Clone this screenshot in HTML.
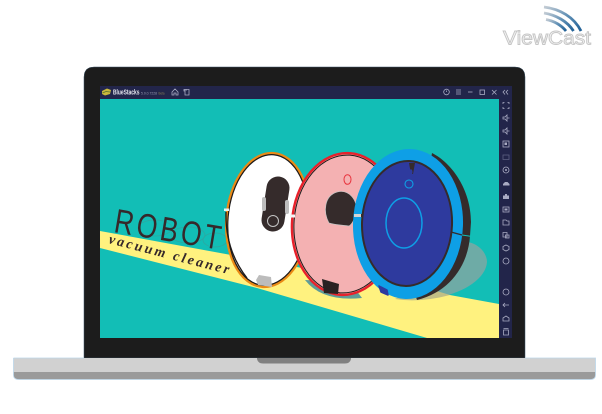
<!DOCTYPE html>
<html><head><meta charset="utf-8"><style>
html,body{margin:0;padding:0;background:#fff;width:602px;height:414px;overflow:hidden}
svg{display:block;filter:blur(.3px)}
text{font-family:"Liberation Sans",sans-serif}
</style></head><body>
<svg width="602" height="414" viewBox="0 0 602 414" xmlns="http://www.w3.org/2000/svg">
<defs>
<clipPath id="scr"><rect x="100" y="99" width="399" height="239"/></clipPath>
<linearGradient id="arc" x1="0" x2="1" y1="0" y2="1"><stop offset="0" stop-color="#c4ccd4"/><stop offset=".5" stop-color="#5f8fb5"/><stop offset="1" stop-color="#1f5f95"/></linearGradient>
</defs>

<!-- logo -->
<g fill="none" stroke="url(#arc)" stroke-width="2.800">
<path d="M544 7C560 9 574 17 581 31"/>
<path d="M544 13C556 15 567 21 573.500 31"/>
<path d="M546 19.500C554 21 561 25 566 31"/>
</g>
<text x="503" y="44.500" font-size="19" textLength="88" lengthAdjust="spacingAndGlyphs" fill="#f6f6f6" stroke="#c6c6c6" stroke-width=".9">ViewCast</text>

<!-- laptop -->
<path d="M84 358V77Q84 67 94 67H515Q525 67 525 77V358Z" fill="#1c1c1c" stroke="#3d5568" stroke-width=".5"/>
<rect x="100" y="86" width="412" height="13" fill="#22254a"/>
<rect x="499" y="86" width="13" height="252" fill="#22254a"/>
<rect x="13.500" y="358" width="582" height="14" fill="#d1d1d1"/>
<path d="M13.500 372H595.500V375Q595.500 379.500 590 379.500H19Q13.500 379.500 13.500 375Z" fill="#9a9a9a"/>
<path d="M13.500 358H84M525 358H595.500V375Q595.500 379.500 590 379.500H19Q13.500 379.500 13.500 375V358" fill="none" stroke="#bcd6ea" stroke-width=".8"/>
<path d="M257 358H351V359Q350 363.500 345 363.500H263Q258 363.500 257 359Z" fill="#808080"/>

<!-- screen -->
<g clip-path="url(#scr)">
<rect x="100" y="99" width="399" height="239" fill="#12beb6"/>
<path d="M100 231L499 304V338H427L257 288L100 248Z" fill="#fff27f"/>
<!-- shadows -->
<path d="M420 297C410 280 430 250 460 242C476 240 487 252 487 262C486 278 465 292 440 297Z" fill="#6eaba6"/>
<path d="M395 299Q420 303 450 295L420 286Z" fill="#c3bf85"/>
<path d="M305 280Q322 302 362 298L350 282Z" fill="#5f9c98"/>

<!-- ghost text -->
<g fill="none" stroke="#2ea7a1" stroke-width=".8"><ellipse cx="155" cy="228" rx="17" ry="8"/><ellipse cx="188" cy="235" rx="17" ry="8"/><ellipse cx="215" cy="240" rx="12" ry="7"/></g>

<!-- ROBOT -->
<text transform="translate(113 232) rotate(9.500) scale(.78 1)" font-size="34" letter-spacing="4.200" fill="#35282a">ROBOT</text>
<text transform="translate(108 243) rotate(14.500)" style='font-family:"Liberation Serif",serif' font-size="14" font-style="italic" font-weight="bold" textLength="124" fill="#35282a">vacuum cleaner</text>

<!-- white robot -->
<g transform="rotate(5 268 220)">
<ellipse cx="268" cy="220" rx="41.500" ry="67" fill="#fff" stroke="#ea8a16" stroke-width="2.600"/>
<ellipse cx="268" cy="220" rx="40" ry="65.500" fill="none" stroke="#1d1a1a" stroke-width="1.200"/>
</g>
<path d="M226 212Q225 250 247 278" fill="none" stroke="#1d1a1a" stroke-width="1.300"/>
<rect x="224" y="208.500" width="5" height="2.500" fill="#e8f6f4"/>
<path d="M278 188L273 220" stroke="#352b2b" stroke-width="23" stroke-linecap="round"/>
<rect x="262" y="197" width="4" height="14" rx="2" fill="#bdbdbd"/>
<rect x="285" y="200" width="4" height="14" rx="2" fill="#bdbdbd"/>
<circle cx="273" cy="221" r="5.500" fill="none" stroke="#c4c4c4" stroke-width="1"/>
<path d="M259 275L271 277L272 287L258 285L256 280Z" fill="#bcbcbc"/>

<!-- pink robot -->
<g transform="rotate(4 345 224)">
<ellipse cx="345" cy="224" rx="53" ry="71" fill="#f4b1b2" stroke="#e8212b" stroke-width="2.400"/>
<ellipse cx="345" cy="224" rx="51" ry="69" fill="none" stroke="#1d1a1a" stroke-width="1"/>
</g>
<rect x="290" y="214.500" width="5" height="3" fill="#f5f5f5"/>
<ellipse cx="347.500" cy="179.500" rx="3.500" ry="4.800" fill="none" stroke="#e8333d" stroke-width="1"/>
<path d="M329 223C323 212 324 196 337 192C349 189 358 200 356 212C355 220 351 225 349 226C342 225 335 225 329 223Z" fill="#352b2b" stroke="#c4c4c4" stroke-width=".7"/>
<path d="M322 279L339 284L338 294L324 293Z" fill="#2a2222"/>

<!-- blue robot -->
<path d="M432 153C452 163 471 190 471 222L470 236C468 265 450 292 417 300L410 280Z" fill="#352b2b"/>
<g transform="rotate(2 408 224)">
<ellipse cx="408" cy="224" rx="55" ry="75" fill="#0e9fe6"/>
<ellipse cx="407" cy="223.500" rx="45" ry="62.500" fill="#2e3a9e" stroke="#352b2b" stroke-width="2"/>
</g>
<path d="M409 163L415 163L413 174H411Z" fill="#352b2b"/>
<ellipse cx="411" cy="172" rx="1.500" ry="2.800" fill="#2e3a9e"/>
<circle cx="409" cy="184" r="4" fill="none" stroke="#0e9fe6" stroke-width="1.100"/>
<ellipse cx="404" cy="223" rx="18" ry="25" fill="none" stroke="#0e9fe6" stroke-width="1.500"/>
<rect x="354" y="214" width="7" height="3" fill="#d5d5d5"/>
<rect x="361" y="214" width="2" height="3" fill="#352b2b"/>
<path d="M451 232L462 235" stroke="#352b2b" stroke-width="1.400"/>
<path d="M462 235L472 236.500" stroke="#12beb6" stroke-width="1"/>
<path d="M379 286L387 290L388 295L381 292Z" fill="#2e3a9e" stroke="#2e3a9e" stroke-width="1.500" stroke-linejoin="round"/>
</g>

<!-- title bar -->
<path d="M102 91L107 88.500L111 90L110 94L105 95.500L102 94Z" fill="#c9b83c"/>
<path d="M102.500 93L106 91.500L110 92" stroke="#55702e" stroke-width=".7" fill="none"/>
<text x="113" y="94.500" font-size="7" font-weight="bold" textLength="26.500" lengthAdjust="spacingAndGlyphs" fill="#e6e7ef">BlueStacks</text>
<text x="141" y="94.500" font-size="4" textLength="16" lengthAdjust="spacingAndGlyphs" fill="#9a9cb3">5.0.0.7228</text>
<text x="158.500" y="94.500" font-size="4" textLength="6" lengthAdjust="spacingAndGlyphs" fill="#8d7f55">Beta</text>

<g fill="none" stroke="#a9abc2" stroke-width=".8">
<path d="M172 92L175 89L178 92V95H176V93H174V95H172Z"/>
<path d="M184 89.500H189V95H185V91H184ZM183.500 90H187"/>
<!-- right title icons -->
<circle cx="446.500" cy="92" r="2.800"/><path d="M446.500 90.500V92"/>
<path d="M456 90H461M456 92H461M456 94H461"/>
<path d="M468 92H472.500"/>
<rect x="480" y="90" width="4.500" height="4.500"/>
<path d="M492 90L496.500 94.500M496.500 90L492 94.500"/>
<path d="M505 90L503 92L505 94.500M508 90L506 92L508 94.500"/>

<!-- side icons -->
<path d="M503 104V102.500H504.500M507.500 102.500H509V104M509 107V108.500H507.500M504.500 108.500H503V107"/>
<path d="M503 117H505L507 115V121L505 119H503ZM507 118H509.500"/>
<path d="M503 130H505L507 128V134L505 132H503ZM507 131H509.500"/>
<rect x="503" y="141" width="6" height="6"/>
<rect x="503" y="155" width="6" height="4.500" stroke="#5d5f80"/>
<circle cx="506" cy="170" r="3"/>
<rect x="503" y="207" width="6" height="5"/>
<path d="M503 220H506L507 221H509V225H503Z"/>
<path d="M503 232.500H507V237H503ZM505.500 235H509V238H505.500Z"/>
<path d="M506 245L509 246.500V249.500L506 251L503 249.500V246.500Z"/>
<circle cx="506" cy="261" r="3"/>
<circle cx="506" cy="292" r="3"/>
<path d="M509 305H503M505 303L503 305L505 307"/>
<path d="M503 321V318L506 316L509 318V321Z"/>
<path d="M503.500 330H508.500V335H503.500ZM503.500 328.500H508.500"/>
</g>
<g fill="#a9abc2">
<rect x="504.500" y="142.500" width="2.500" height="2.500"/>
<circle cx="506" cy="170" r="1"/>
<path d="M503 185.500H509.500V184L507.500 182H505L503 184Z"/>
<path d="M503 195.500H505V194H507V195.500H509V199H503Z"/>
<rect x="504.500" y="208.500" width="3" height="2"/>
</g>
</svg>
</body></html>
